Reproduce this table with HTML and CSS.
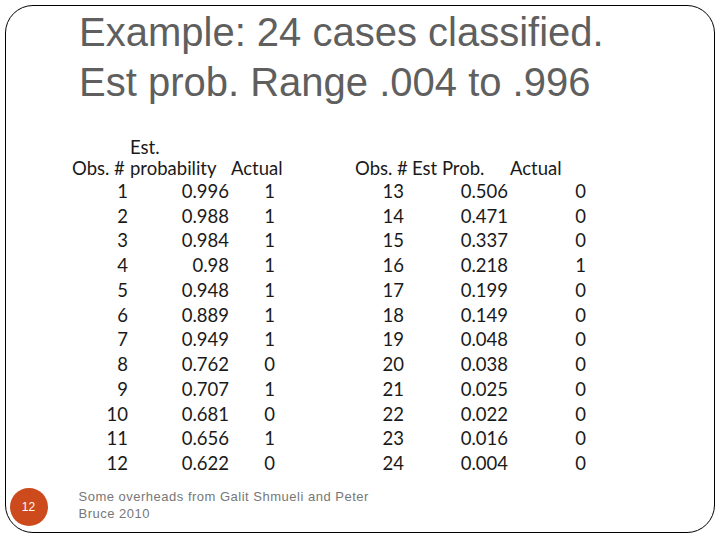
FILE: index.html
```html
<!DOCTYPE html>
<html>
<head>
<meta charset="utf-8">
<link rel="stylesheet" href="styles.css">
</head>
<body>
<div class="slide">
  <h1 class="title">Example: 24 cases classified.<br>Est prob. Range .004 to .996</h1>
  <div class="tables">
    <div class="grid grid-left">
      <div class="hd h1">Obs. #</div>
      <div class="hd h2">Est.<br>probability</div>
      <div class="hd h3">Actual</div>
      <div class="c1">1</div><div class="c2">0.996</div><div class="c3">1</div>
      <div class="c1">2</div><div class="c2">0.988</div><div class="c3">1</div>
      <div class="c1">3</div><div class="c2">0.984</div><div class="c3">1</div>
      <div class="c1">4</div><div class="c2">0.98</div><div class="c3">1</div>
      <div class="c1">5</div><div class="c2">0.948</div><div class="c3">1</div>
      <div class="c1">6</div><div class="c2">0.889</div><div class="c3">1</div>
      <div class="c1">7</div><div class="c2">0.949</div><div class="c3">1</div>
      <div class="c1">8</div><div class="c2">0.762</div><div class="c3">0</div>
      <div class="c1">9</div><div class="c2">0.707</div><div class="c3">1</div>
      <div class="c1">10</div><div class="c2">0.681</div><div class="c3">0</div>
      <div class="c1">11</div><div class="c2">0.656</div><div class="c3">1</div>
      <div class="c1">12</div><div class="c2">0.622</div><div class="c3">0</div>
    </div>
    <div class="grid grid-right">
      <div class="hd r1">Obs. #</div>
      <div class="hd r2">Est Prob.</div>
      <div class="hd r3">Actual</div>
      <div class="c1">13</div><div class="c2">0.506</div><div class="c3">0</div>
      <div class="c1">14</div><div class="c2">0.471</div><div class="c3">0</div>
      <div class="c1">15</div><div class="c2">0.337</div><div class="c3">0</div>
      <div class="c1">16</div><div class="c2">0.218</div><div class="c3">1</div>
      <div class="c1">17</div><div class="c2">0.199</div><div class="c3">0</div>
      <div class="c1">18</div><div class="c2">0.149</div><div class="c3">0</div>
      <div class="c1">19</div><div class="c2">0.048</div><div class="c3">0</div>
      <div class="c1">20</div><div class="c2">0.038</div><div class="c3">0</div>
      <div class="c1">21</div><div class="c2">0.025</div><div class="c3">0</div>
      <div class="c1">22</div><div class="c2">0.022</div><div class="c3">0</div>
      <div class="c1">23</div><div class="c2">0.016</div><div class="c3">0</div>
      <div class="c1">24</div><div class="c2">0.004</div><div class="c3">0</div>
    </div>
  </div>
  <div class="footer">
    <div class="badge">12</div>
    <div class="note">Some overheads from Galit Shmueli and Peter<br>Bruce 2010</div>
  </div>
</div>
</body>
</html>
```

FILE: styles.css
```css
html, body {
  margin: 0;
  padding: 0;
  background: #ffffff;
}

.slide {
  box-sizing: border-box;
  width: 710px;
  height: 528px;
  margin: 5px 0 0 5px;
  border: 1.5px solid #000000;
  border-radius: 28px;
  display: flex;
  flex-direction: column;
}

.title {
  margin: 1px 0 0 73px;
  font-family: "Liberation Sans", Arial, sans-serif;
  font-weight: normal;
  font-size: 40px;
  line-height: 50px;
  color: #5f5f5f;
}

.tables {
  display: flex;
  margin: 47px 0 0 66px;
  gap: 71px;
  font-family: "Lato", "Open Sans", sans-serif;
  font-size: 18.5px;
  color: #1a1a1a;
}

.grid {
  display: grid;
  grid-auto-rows: 24.75px;
  align-items: center;
}

.grid-left {
  grid-template-columns: 57px 101px 54px;
}

.grid-right {
  grid-template-columns: 51px 103px 80px;
}

.grid > div {
  line-height: 24.75px;
  white-space: nowrap;
}

.grid .hd {
  align-self: end;
  line-height: 21px;
  text-align: left;
}

.h2 { padding-left: 1px; }
.h3 { padding-left: 1px; }
.r2 { padding-left: 6px; }
.r3 { padding-left: 1px; }

.c1, .c2, .c3 {
  text-align: right;
}

.grid-left .c1 { padding-right: 1px; }
.grid-left .c2 { padding-right: 1px; }
.grid-left .c3 { padding-right: 9px; }
.grid-right .c1 { padding-right: 2px; }
.grid-right .c2 { padding-right: 1px; }
.grid-right .c3 { padding-right: 3px; }

.footer {
  margin-top: auto;
  margin-bottom: 6px;
  display: flex;
  align-items: flex-start;
}

.badge {
  width: 38px;
  height: 38px;
  border-radius: 50%;
  background: #cc4a1c;
  color: #ffffff;
  margin-left: 3.5px;
  font-family: "Liberation Sans", Arial, sans-serif;
  font-size: 12px;
  display: flex;
  align-items: center;
  justify-content: center;
}

.note {
  margin-left: 31px;
  font-family: "Liberation Sans", Arial, sans-serif;
  font-size: 13px;
  line-height: 17px;
  color: #777777;
  letter-spacing: 0.5px;
}
```
